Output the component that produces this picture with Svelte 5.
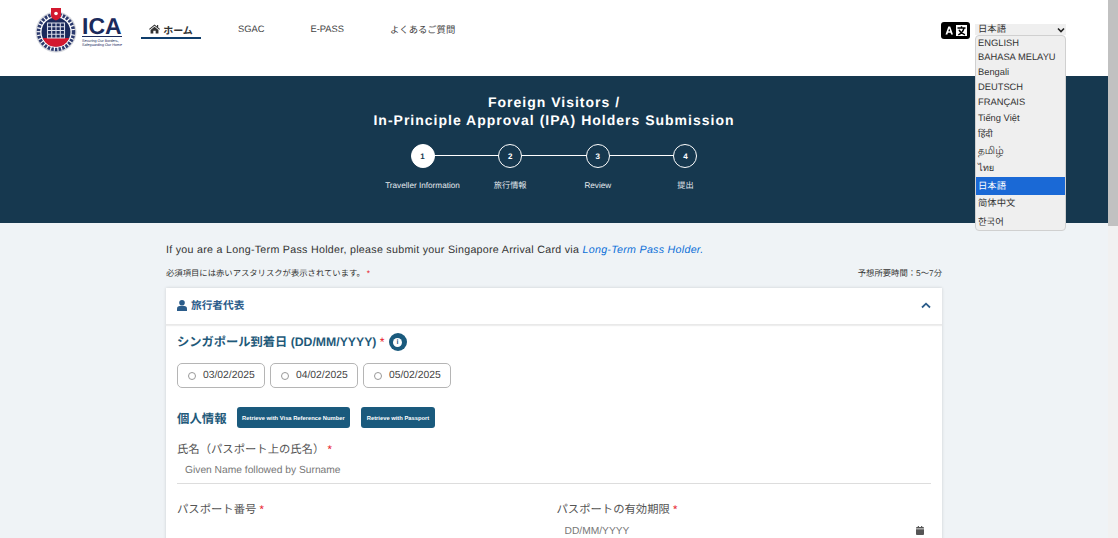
<script>
  const navItems = ['SGAC', 'E-PASS', 'よくあるご質問'];
  const languages = ['ENGLISH', 'BAHASA MELAYU', 'Bengali', 'DEUTSCH', 'FRANÇAIS', 'Tiếng Việt', 'हिंदी', 'தமிழ்', 'ไทย', '日本語', '简体中文', '한국어'];
  const steps = [
    { n: 1, label: 'Traveller Information' },
    { n: 2, label: '旅行情報' },
    { n: 3, label: 'Review' },
    { n: 4, label: '提出' },
  ];
  const dates = ['03/02/2025', '04/02/2025', '05/02/2025'];
</script>

<div class="window">
  <div class="page">
    <!-- HEADER -->
    <header class="topbar">
      <div class="logo">
        <svg class="crest" width="42" height="45" viewBox="0 0 42 45" aria-hidden="true">
          <circle cx="21" cy="24" r="20.500" fill="#d5d7dd" />
          <circle cx="21" cy="24" r="18.500" fill="#fff" />
          <circle cx="21" cy="24" r="17.500" fill="none" stroke="#2c3a6e" stroke-width="3.500" stroke-dasharray="2.500 1.200" />
          <circle cx="21" cy="24" r="14.500" fill="#1b2a5c" />
          <path d="M7.700 30h26.600a14.500 14.500 0 0 1-26.600 0z" fill="#d3182f" />
          <path d="M12.500 15h17v15h-17zM16.700 15v15M21 15v15M25.300 15v15M12.500 18.700h17M12.500 22.500h17M12.500 26.200h17" fill="none" stroke="#d7dbe8" stroke-width="1.100" />
          <path d="M16 0h10v8c0 2-3 3.500-5 4.500-2-1-5-2.500-5-4.500z" fill="#d3182f" />
          <circle cx="21" cy="5.500" r="1.800" fill="#fff" />
        </svg>
        <div class="wordmark">
          <span class="ica">ICA</span>
          <span class="tagline">Securing Our Borders,<br />Safeguarding Our Home</span>
        </div>
      </div>

      <nav class="nav">
        <a class="nav-link active" href="#home">
          <svg width="11" height="10" viewBox="0 0 12 10" aria-hidden="true"><path d="M6 0 0 5l.7.8L6 1.500l5.300 4.300L12 5 10 3.300V.7H8.700v1.500zM1.700 6v4h3V7h2.600v3h3V6L6 2.500z" fill="#333" /></svg>
          ホーム
        </a>
        {#each navItems as item}
          <a class="nav-link" href="#item">{item}</a>
        {/each}
      </nav>

      <div class="lang-icon">
        <svg width="29" height="17" viewBox="0 0 29 17" aria-hidden="true">
          <rect width="29" height="17" rx="3" fill="#000" />
          <path d="M4.500 12.500 7.300 4.500h1.900l2.800 8h-1.900l-.5-1.700H6.900l-.5 1.700zM7.300 9.300h1.900L8.250 6.400z" fill="#fff" />
          <rect x="15" y="3" width="11" height="11" fill="#fff" />
          <path d="M16.500 6h8M20.500 4.300V6M23 6c-.6 2.700-2.800 5.400-5.700 6.800M18 7.800c1 2.200 3.300 4 6 5" fill="none" stroke="#000" stroke-width="1.400" />
        </svg>
      </div>

      <div class="lang-select">
        <span>日本語</span>
        <svg width="8" height="6" viewBox="0 0 8 6" aria-hidden="true"><path d="M1 1.500 4 4.500l3-3" fill="none" stroke="#222" stroke-width="1.600" /></svg>
      </div>
    </header>

    <!-- HERO -->
    <section class="hero">
      <h1>Foreign Visitors /<br />In-Principle Approval (IPA) Holders Submission</h1>
      <ol class="steps">
        {#each steps as step}
          <li class="step" class:current={step.n === 1}>
            <span class="dot">{step.n}</span>
            <span class="step-label">{step.label}</span>
          </li>
        {/each}
      </ol>
    </section>

    <!-- MAIN -->
    <main class="main">
      <p class="notice">If you are a Long-Term Pass Holder, please submit your Singapore Arrival Card via <a href="#ltp">Long-Term Pass Holder.</a></p>
      <div class="meta">
        <span>必須項目には赤いアスタリスクが表示されています。<b class="req meta-req">*</b></span>
        <span>予想所要時間：5～7分</span>
      </div>

      <div class="card">
        <div class="card-head">
          <span class="card-title">
            <svg width="10" height="11" viewBox="0 0 10 11" aria-hidden="true"><circle cx="5" cy="2.800" r="2.800" fill="#2b5c8a" /><path d="M0 11V8.500C0 7 1.200 6 2.600 6h4.800C8.800 6 10 7 10 8.500V11z" fill="#2b5c8a" /></svg>
            旅行者代表
          </span>
          <svg width="10" height="7" viewBox="0 0 10 7" aria-hidden="true"><path d="M1 5.500 5 1.700l4 3.800" fill="none" stroke="#2b5c8a" stroke-width="1.800" /></svg>
        </div>

        <div class="card-body">
          <div class="arrival-head">
            <span class="arrival-title">シンガポール到着日 (DD/MM/YYYY) <b class="req">*</b></span>
            <span class="info"><i>i</i></span>
          </div>

          <div class="date-row">
            {#each dates as date}
              <label class="date-opt"><span class="radio"></span>{date}</label>
            {/each}
          </div>

          <div class="personal-head">
            <span class="section-title">個人情報</span>
            <button class="retrieve">Retrieve with Visa Reference Number</button>
            <button class="retrieve">Retrieve with Passport</button>
          </div>

          <div class="field">
            <span class="field-label">氏名（パスポート上の氏名） <b class="req">*</b></span>
            <div class="input underlined">Given Name followed by Surname</div>
          </div>

          <div class="two-col">
            <div class="field">
              <span class="field-label">パスポート番号 <b class="req">*</b></span>
            </div>
            <div class="field">
              <span class="field-label">パスポートの有効期限 <b class="req">*</b></span>
              <div class="input date-input">
                DD/MM/YYYY
                <svg width="8" height="9" viewBox="0 0 9 10" aria-hidden="true"><path d="M0 3.500h9V9a1 1 0 0 1-1 1H1a1 1 0 0 1-1-1zM0 2.800V2.200a1 1 0 0 1 1-1h1V0h1.300v1.200h2.400V0H7v1.200h1a1 1 0 0 1 1 1v.6z" fill="#555" /></svg>
              </div>
            </div>
          </div>
        </div>
      </div>
    </main>

    <!-- LANGUAGE LIST -->
    <ul class="lang-list">
      {#each languages as lang}
        <li class:selected={lang === '日本語'}>{lang}</li>
      {/each}
    </ul>
  </div>

  <div class="scrollbar"><div class="thumb"></div></div>
</div>

<style>
:global(body) { margin: 0; }

.window {
  display: flex;
  height: 538px;
  overflow: hidden;
  font-family: "Liberation Sans", "Noto Sans CJK JP", sans-serif;
  color: #333;
  text-rendering: geometricPrecision;
}
.page {
  position: relative;
  flex: 1;
  min-width: 0;
  background: #eff3f6;
}
.scrollbar { width: 10px; background: #f1f1f1; }
.thumb { height: 226px; background: #c1c1c1; }

/* HEADER */
.topbar {
  display: flex;
  align-items: flex-start;
  height: 76px;
  box-sizing: border-box;
  background: #fff;
  padding: 8px 0 0 35px;
}
.logo { display: flex; gap: 5px; width: 106px; flex-shrink: 0; }
.crest { display: block; }
.wordmark { display: flex; flex-direction: column; width: 40px; padding-top: 7.500px; color: #1b2a5c; }
.ica { font-size: 23px; line-height: 20px; font-weight: 700; border-bottom: 1px solid #1b2a5c; }
.tagline { font-size: 3.700px; line-height: 4.500px; margin-top: 2px; white-space: nowrap; }

.nav { display: flex; gap: 46px; font-size: 9.330px; padding-top: 13px; }
.nav-link {
  display: flex;
  align-items: center;
  gap: 3px;
  height: 16px;
  color: #444;
  text-decoration: none;
  white-space: nowrap;
}
.nav-link.active {
  font-weight: 700;
  font-size: 10px;
  color: #333;
  width: 60px;
  justify-content: center;
  border-bottom: 2px solid #0f3d6b;
  margin-right: -9px;
}

.lang-icon { margin: 14px 0 0 auto; line-height: 0; }
.lang-select {
  display: flex;
  align-items: center;
  justify-content: space-between;
  box-sizing: border-box;
  width: 91px;
  height: 11px;
  margin: 16px 42px 0 5px;
  padding: 0 1px 0 3px;
  background: #efefef;
  font-size: 9.330px;
  line-height: 11px;
}

/* HERO */
.hero {
  height: 147px;
  box-sizing: border-box;
  background: #16384f;
  color: #fff;
  padding-top: 17px;
  text-align: center;
}
.hero h1 {
  margin: 0;
  font-size: 14px;
  line-height: 18px;
  font-weight: 700;
  letter-spacing: 1px;
}
.steps {
  display: flex;
  justify-content: center;
  list-style: none;
  margin: 15px 0 0;
  padding: 0;
}
.step {
  position: relative;
  display: flex;
  flex-direction: column;
  align-items: center;
  width: 87.670px;
  gap: 13px;
}
.step:not(:last-child)::after {
  content: '';
  position: absolute;
  top: 11px;
  left: 50%;
  width: 100%;
  height: 1px;
  background: #fff;
}
.dot {
  position: relative;
  z-index: 1;
  display: flex;
  align-items: center;
  justify-content: center;
  box-sizing: border-box;
  width: 24px;
  height: 24px;
  border: 1.500px solid #fff;
  border-radius: 50%;
  background: #16384f;
  font-size: 8px;
  font-weight: 700;
}
.current .dot { background: #fff; color: #16384f; }
.step-label { font-size: 8.200px; line-height: 10px; white-space: nowrap; color: #e4e9ee; }

/* MAIN */
.main { padding: 0 166px; }
.notice { margin: 0; padding-top: 20px; font-size: 10.670px; line-height: 14px; letter-spacing: 0.290px; color: #333; white-space: nowrap; }
.notice a { color: #0b6fd8; font-style: italic; text-decoration: none; }
.meta {
  display: flex;
  justify-content: space-between;
  margin-top: 11px;
  font-size: 8.330px;
  line-height: 11px;
  color: #333;
}
.req { color: #e8202a; font-weight: 400; }
.meta-req { margin-left: 2px; }

.card {
  margin-top: 9px;
  background: #fff;
  box-shadow: 0 0 3px rgba(0, 0, 0, 0.15);
}
.card-head {
  display: flex;
  align-items: center;
  justify-content: space-between;
  height: 37px;
  padding: 0 11px 1px;
  box-sizing: border-box;
  border-bottom: 1px solid #e9e9e9;
  box-shadow: 0 1px 1px #eee;
}
.card-title { display: flex; align-items: center; gap: 4px; font-size: 10.670px; font-weight: 700; color: #2b5c8a; }
.card-body { padding: 0 11px; height: 300px; }

.arrival-head { display: flex; align-items: center; gap: 4px; padding-top: 7px; height: 20px; }
.arrival-title { font-size: 12.250px; font-weight: 700; color: #1f5a7a; line-height: 18px; }
.info {
  display: flex;
  align-items: center;
  justify-content: center;
  width: 18px;
  height: 18px;
  border-radius: 50%;
  background: #1a5a7d;
}
.info i {
  width: 9px;
  height: 9px;
  border-radius: 50%;
  background: #fff;
  color: #1a5a7d;
  font: 700 7px/9px "Liberation Sans", sans-serif;
  text-align: center;
}

.date-row { display: flex; gap: 5px; margin-top: 11px; }
.date-opt {
  display: flex;
  align-items: center;
  gap: 7px;
  box-sizing: border-box;
  width: 88px;
  height: 25px;
  padding-left: 10px;
  border: 1px solid #b5b5b5;
  border-radius: 5px;
  font-size: 10.330px;
  color: #444;
}
.radio { width: 6px; height: 6px; border: 1px solid #999; border-radius: 50%; }

.personal-head { display: flex; align-items: center; margin-top: 19px; }
.section-title { font-size: 12.400px; font-weight: 700; color: #1f5a7a; margin-right: 10px; }
.retrieve {
  height: 21px;
  margin-right: 11px;
  padding: 0 5.500px;
  border: 0;
  border-radius: 3px;
  background: #1a5a7d;
  color: #fff;
  font: 700 5.800px "Liberation Sans", sans-serif;
}

.field { margin-top: 15px; }
.field-label { display: block; font-size: 11.330px; line-height: 14px; color: #555; }
.input { padding-left: 8px; margin-top: 7px; font-size: 10.250px; line-height: 13px; color: #777; }
.underlined { padding-bottom: 6px; border-bottom: 1.500px solid #ddd; }

.two-col { display: grid; grid-template-columns: 1fr 1fr; gap: 0 5px; margin-top: 4px; }
.date-input { display: flex; align-items: center; justify-content: space-between; padding-right: 7px; margin-top: 8px; }
.date-input svg { margin-top: -3px; }

/* LANGUAGE LIST */
.lang-list {
  position: absolute;
  top: 35px;
  left: 975px;
  box-sizing: border-box;
  width: 91px;
  height: 196px;
  margin: 0;
  padding: 0;
  list-style: none;
  background: #efefef;
  border: 1px solid #d0d0d0;
  border-radius: 4px;
  overflow: hidden;
  font-size: 9.330px;
  color: #333;
  font-family: "Liberation Sans", "Noto Sans", "Noto Sans CJK JP", sans-serif;
}
.lang-list li { height: 15.100px; line-height: 15.100px; padding-left: 2px; white-space: nowrap; }
.lang-list li:nth-child(1) { height: 14.200px; line-height: 14.200px; }
.lang-list li:nth-child(7) { height: 17.400px; line-height: 17.400px; }
.lang-list li:nth-child(8) { height: 17.400px; line-height: 17.400px; font-size: 10.500px; }
.lang-list li:nth-child(9) { height: 16.500px; line-height: 16.500px; }
.lang-list li:nth-child(10) { height: 18.300px; line-height: 18.300px; }
.lang-list li:nth-child(11) { height: 17.500px; line-height: 17.500px; }
.lang-list li:nth-child(12) { height: 18px; line-height: 18px; }
.lang-list li.selected { background: #1a69d6; color: #fff; }
</style>
